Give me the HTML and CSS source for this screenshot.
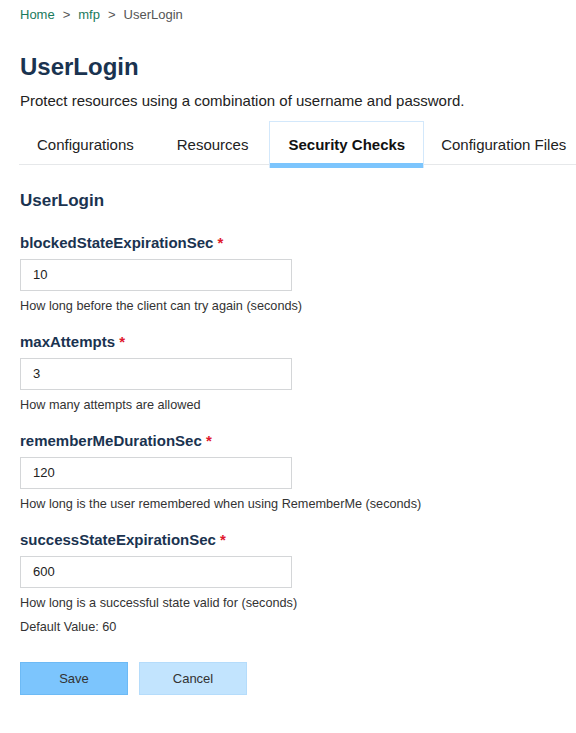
FILE: index.html
```html
<!DOCTYPE html>
<html>
<head>
<meta charset="utf-8">
<link rel="stylesheet" href="styles.css">
</head>
<body>
<div class="page">
  <nav class="crumbs">
    <a class="crumb-link">Home</a><span class="sep">&gt;</span><a class="crumb-link">mfp</a><span class="sep">&gt;</span><span class="crumb-current">UserLogin</span>
  </nav>
  <h1 class="title">UserLogin</h1>
  <p class="desc">Protect resources using a combination of username and password.</p>
  <div class="tabs">
    <div class="tab t1">Configurations</div>
    <div class="tab t2">Resources</div>
    <div class="tab t3 active">Security Checks</div>
    <div class="tab t4">Configuration Files</div>
  </div>
  <h2 class="section">UserLogin</h2>
  <div class="field">
    <label class="label">blockedStateExpirationSec <span class="req">*</span></label>
    <div class="input">10</div>
    <div class="help">How long before the client can try again (seconds)</div>
  </div>
  <div class="field">
    <label class="label">maxAttempts <span class="req">*</span></label>
    <div class="input">3</div>
    <div class="help">How many attempts are allowed</div>
  </div>
  <div class="field">
    <label class="label">rememberMeDurationSec <span class="req">*</span></label>
    <div class="input">120</div>
    <div class="help">How long is the user remembered when using RememberMe (seconds)</div>
  </div>
  <div class="field">
    <label class="label">successStateExpirationSec <span class="req">*</span></label>
    <div class="input">600</div>
    <div class="help">How long is a successful state valid for (seconds)</div>
    <div class="help default">Default Value: 60</div>
  </div>
  <div class="buttons">
    <button class="btn save">Save</button>
    <button class="btn cancel">Cancel</button>
  </div>
</div>
</body>
</html>
```
FILE: styles.css
```css
* { box-sizing: border-box; }
body {
  margin: 0;
  background: #fff;
  font-family: "Liberation Sans", Arial, sans-serif;
  color: #222;
  overflow: hidden;
}
.page {
  padding: 7px 0 0 20px;
}
.crumbs {
  font-size: 13px;
  line-height: 16px;
  height: 16px;
  display: flex;
}
.crumb-link { color: #1a7a5c; }
.sep { color: #555; margin: 0 8px; }
.crumb-current { color: #555; }
.title {
  margin: 30px 0 0 0;
  font-size: 24px;
  line-height: 28px;
  font-weight: bold;
  color: #1a3350;
}
.desc {
  margin: 11px 0 0 0;
  font-size: 15px;
  line-height: 18px;
  color: #222;
}
.tabs {
  margin-top: 11px;
  display: flex;
  height: 47px;
  margin-left: -1px;
  background: linear-gradient(#e6e8ea, #e6e8ea) 0 43px / 100% 1px no-repeat;
}
.tab {
  flex-shrink: 0;
  white-space: nowrap;
  font-size: 15px;
  line-height: 46px;
  color: #222;
  padding: 0 17px;
  height: 47px;
  border: 1px solid transparent;
  border-bottom: 0;
}
.t1 { margin-right: 7px; }
.t2 { margin-right: 3px; }
.t3 { padding: 0 18px; }
.t4 { padding-left: 16px; }
.tab.active {
  font-weight: bold;
  color: #111;
  border-color: #d3e8fb;
  background: #fff;
  box-shadow: inset 0 -5px 0 #7cc5fd;
}
.section {
  margin: 23px 0 0 0;
  font-size: 17px;
  line-height: 20px;
  font-weight: bold;
  color: #1a3350;
}
.field { margin-top: 23px; }
.field + .field { margin-top: 19px; }
.label {
  display: block;
  font-size: 15px;
  line-height: 18px;
  font-weight: bold;
  color: #1a3350;
}
.req { color: #e0182d; }
.input {
  margin-top: 7px;
  width: 272px;
  height: 32px;
  border: 1px solid #d4d6d8;
  font-size: 13px;
  line-height: 30px;
  padding-left: 12px;
  color: #222;
}
.help {
  margin-top: 7px;
  font-size: 12.7px;
  line-height: 16px;
  color: #333;
}
.help.default { margin-top: 8px; }
.buttons {
  margin-top: 27px;
  display: flex;
  gap: 11px;
}
.btn {
  width: 108px;
  height: 33px;
  font-family: "Liberation Sans", Arial, sans-serif;
  font-size: 13px;
  color: #333;
  border: 1px solid;
  padding: 0;
}
.save { background: #7cc5fd; border-color: #6dbaf5; }
.cancel { background: #c2e4fe; border-color: #b5dcfb; }
```
